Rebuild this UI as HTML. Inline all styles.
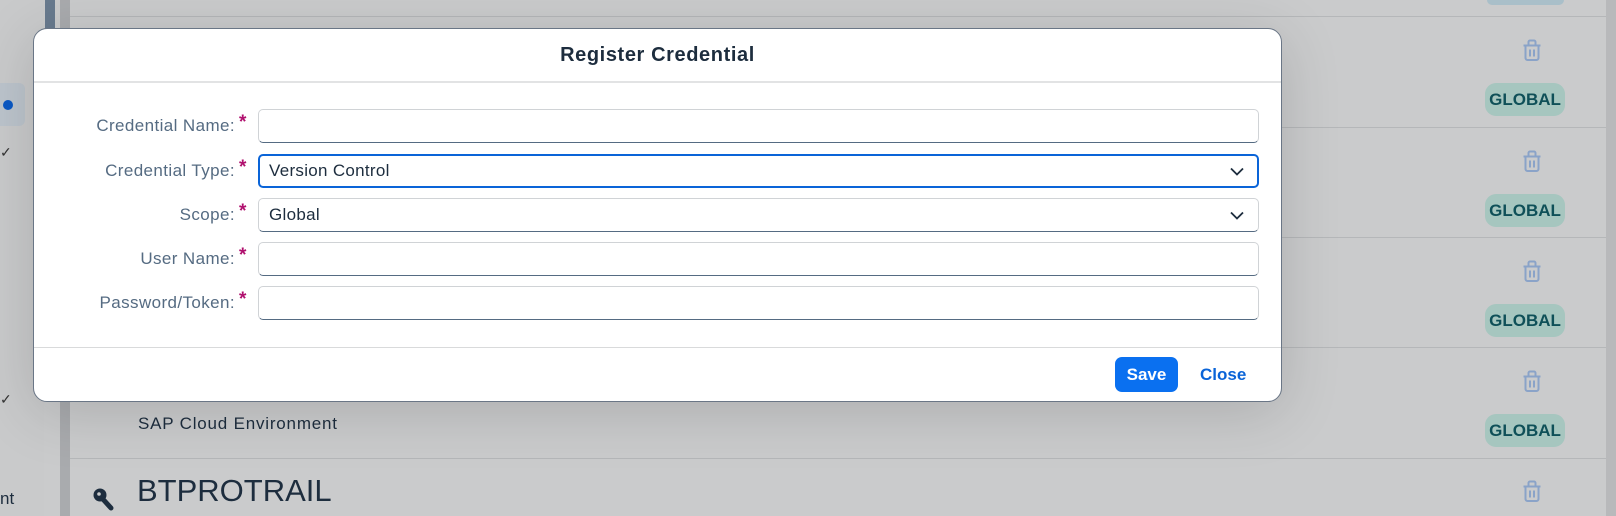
<!DOCTYPE html>
<html><head><style>
*{box-sizing:border-box;margin:0;padding:0}
body{width:1616px;height:516px;overflow:hidden;background:#cacbcc;font-family:"Liberation Sans",sans-serif;position:relative}
.abs{position:absolute}
.hl{position:absolute;left:70px;width:1536px;height:1px;background:#b5b7b9}
.trash{position:absolute;left:1522px;width:20px;height:22px}
.badge{position:absolute;left:1485px;width:80px;height:33px;border-radius:11px;background:#a6c6bf;color:#0f5058;font-weight:bold;font-size:17px;line-height:33px;text-align:center}
.lbl{position:absolute;right:1381px;font-size:17px;letter-spacing:0.4px;color:#556b82;text-align:right;white-space:nowrap}
.ast{position:absolute;left:239px;color:#b0106e;font-weight:bold;font-size:19px}
.inp{position:absolute;left:258px;width:1001px;height:34px;border:1px solid #d0d3d6;border-bottom:1px solid #556b82;border-radius:5px;background:#fff;font-size:17px;letter-spacing:0.3px;color:#1d2d3e;padding-left:10px;line-height:32px}
.chev{position:absolute;right:14px;top:12px}
</style></head><body>
<div class="abs" style="left:0;top:0;width:44px;height:516px;background:#c9cacb"></div>
<div class="abs" style="left:0;top:83px;width:25px;height:43px;background:#bcc4cc;border-radius:0 6px 6px 0"></div>
<div class="abs" style="left:3px;top:100px;width:10px;height:10px;border-radius:50%;background:#0a58c4"></div>
<div class="abs" style="left:0;top:144px;font-size:14px;color:#333">✓</div>
<div class="abs" style="left:0;top:391px;font-size:14px;color:#333">✓</div>
<div class="abs" style="left:0;top:489px;font-size:17px;color:#1d2d3e">nt</div>
<div class="abs" style="left:45px;top:0;width:10px;height:30px;background:#687a8e"></div>
<div class="abs" style="left:60px;top:0;width:10px;height:516px;background:#a9abae"></div>
<div class="abs" style="left:1606px;top:0;width:10px;height:516px;background:#b8b9bb"></div>
<div class="hl" style="top:16px"></div><div class="hl" style="top:127px"></div><div class="hl" style="top:237px"></div><div class="hl" style="top:347px"></div><div class="hl" style="top:458px"></div>
<div class="abs" style="left:1487px;top:0;width:77px;height:5px;background:#a9bfc9;border-radius:0 0 10px 10px"></div>
<svg width="0" height="0" style="position:absolute"><defs><g id="t"><path d="M3.5 6.5h13v12.5a2 2 0 0 1-2 2h-9a2 2 0 0 1-2-2z M1.5 6.5h17 M6.5 6.5V3a1.5 1.5 0 0 1 1.5-1.5h4a1.5 1.5 0 0 1 1.5 1.5v3.5 M8 10.5v7 M12 10.5v7" fill="none" stroke="#8aa3c8" stroke-width="2"/></g></defs></svg>
<svg class="trash" style="top:39px" viewBox="0 0 20 22"><use href="#t"/></svg>
<svg class="trash" style="top:150px" viewBox="0 0 20 22"><use href="#t"/></svg>
<svg class="trash" style="top:260px" viewBox="0 0 20 22"><use href="#t"/></svg>
<svg class="trash" style="top:370px" viewBox="0 0 20 22"><use href="#t"/></svg>
<svg class="trash" style="top:480px" viewBox="0 0 20 22"><use href="#t"/></svg>
<div class="badge" style="top:83px">GLOBAL</div><div class="badge" style="top:194px">GLOBAL</div><div class="badge" style="top:304px">GLOBAL</div><div class="badge" style="top:414px">GLOBAL</div>
<div class="abs" style="left:138px;top:414px;font-size:17px;letter-spacing:0.8px;color:#1d2d3e">SAP Cloud Environment</div>
<div class="abs" style="left:137px;top:473px;font-size:31px;color:#1d2d3e">BTPROTRAIL</div>
<svg class="abs" style="left:93px;top:488px" width="22" height="24" viewBox="0 0 22 24"><circle cx="7" cy="7" r="6.5" fill="#1d2d3e"/><path d="M8 9l10 11" stroke="#1d2d3e" stroke-width="5" stroke-linecap="round"/><circle cx="6" cy="6" r="1.8" fill="#cacbcc"/></svg>

<div class="abs" style="left:33px;top:28px;width:1249px;height:374px;background:#fff;border:1px solid #6a7686;border-radius:14px;box-shadow:0 10px 60px rgba(0,0,0,.15);overflow:hidden">
<div style="height:54px;border-bottom:2px solid #e2e3e4;text-align:center;font-weight:bold;font-size:20px;letter-spacing:0.6px;color:#1d2d3e;line-height:52px">Register Credential</div>
<div class="abs" style="left:0;top:318px;width:100%;height:1px;background:#d9dadb"></div>
<div class="abs" style="left:1081px;top:328px;width:63px;height:35px;border-radius:7px;background:#0a70f0;color:#fff;font-weight:bold;font-size:17px;line-height:35px;text-align:center">Save</div>
<div class="abs" style="left:1166px;top:328px;color:#0a64d8;font-size:17px;line-height:35px;font-weight:bold;">Close</div>
</div>
<div class="lbl" style="top:116px">Credential Name:</div><div class="ast" style="top:112px">*</div>
<div class="lbl" style="top:161px">Credential Type:</div><div class="ast" style="top:157px">*</div>
<div class="lbl" style="top:205px">Scope:</div><div class="ast" style="top:201px">*</div>
<div class="lbl" style="top:249px">User Name:</div><div class="ast" style="top:245px">*</div>
<div class="lbl" style="top:293px">Password/Token:</div><div class="ast" style="top:289px">*</div>
<div class="inp" style="top:109px"></div>
<div class="inp" style="top:154px;border:2px solid #0a64d8;line-height:30px;padding-left:9px">Version Control<svg class="chev" style="top:11px;right:13px" viewBox="0 0 14 9" width="14" height="9"><path d="M1 1.5l6 6 6-6" fill="none" stroke="#1d2d3e" stroke-width="1.8"/></svg></div>
<div class="inp" style="top:198px">Global<svg class="chev" viewBox="0 0 14 9" width="14" height="9"><path d="M1 1.5l6 6 6-6" fill="none" stroke="#1d2d3e" stroke-width="1.8"/></svg></div>
<div class="inp" style="top:242px"></div>
<div class="inp" style="top:286px"></div>
</body></html>
